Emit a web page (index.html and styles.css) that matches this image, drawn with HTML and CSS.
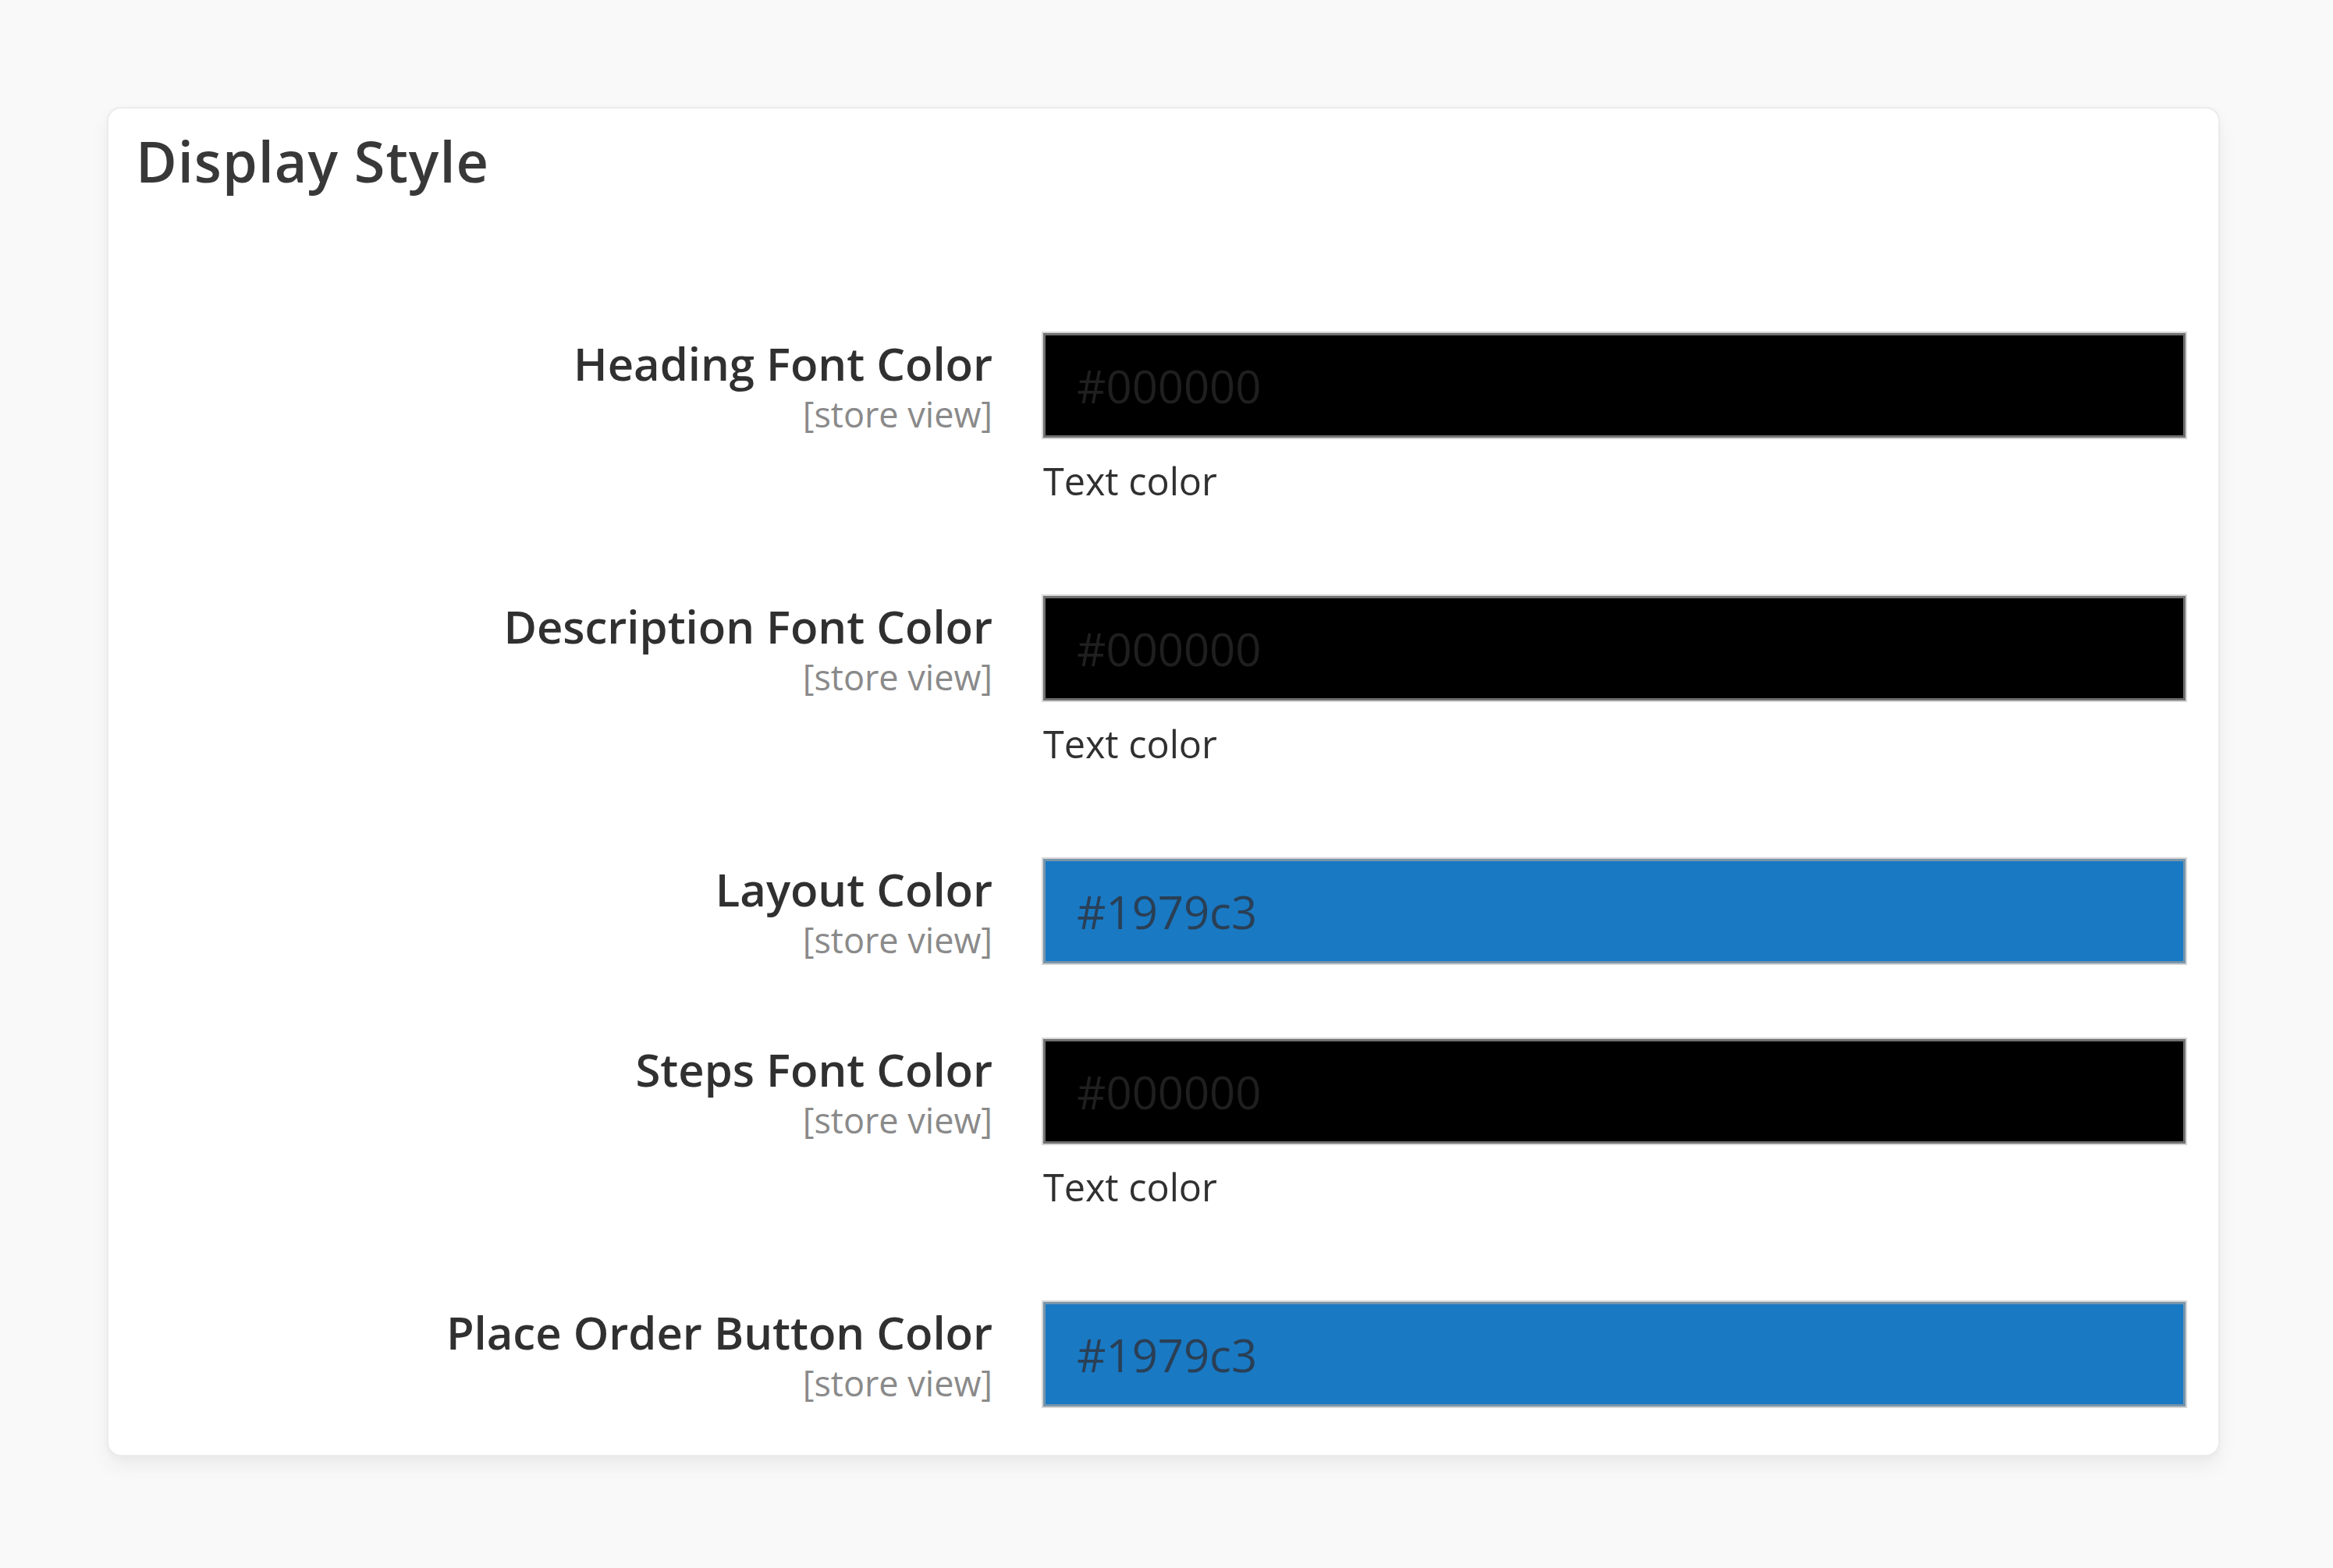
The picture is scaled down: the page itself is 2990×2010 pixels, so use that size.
FILE: index.html
```html
<!DOCTYPE html>
<html lang="en">
<head>
<meta charset="utf-8">
<title>Display Style</title>
<link rel="stylesheet" href="styles.css">
</head>
<body>
<div class="card">
  <h2 class="title">Display Style</h2>
  <div class="fields">
    <div class="field">
      <div class="label"><span class="label-text">Heading Font Color</span><span class="scope">[store view]</span></div>
      <div class="control"><input class="color-input dark" type="text" value="#000000"><div class="note">Text color</div></div>
    </div>
    <div class="field">
      <div class="label"><span class="label-text">Description Font Color</span><span class="scope">[store view]</span></div>
      <div class="control"><input class="color-input dark" type="text" value="#000000"><div class="note">Text color</div></div>
    </div>
    <div class="field">
      <div class="label"><span class="label-text">Layout Color</span><span class="scope">[store view]</span></div>
      <div class="control"><input class="color-input blue" type="text" value="#1979c3"></div>
    </div>
    <div class="field">
      <div class="label"><span class="label-text">Steps Font Color</span><span class="scope">[store view]</span></div>
      <div class="control"><input class="color-input dark" type="text" value="#000000"><div class="note">Text color</div></div>
    </div>
    <div class="field last">
      <div class="label"><span class="label-text">Place Order Button Color</span><span class="scope">[store view]</span></div>
      <div class="control"><input class="color-input blue" type="text" value="#1979c3"></div>
    </div>
  </div>
</div>
</body>
</html>
```

FILE: styles.css
```css
html, body {
  margin: 0;
  background: #f9f9f9;
}
body {
  padding: 137px;
  font-family: "Open Sans", "Noto Sans", "DejaVu Sans", sans-serif;
  color: #303030;
}
.card {
  box-sizing: border-box;
  width: 2708px;
  background: #ffffff;
  border: 2px solid #ebebeb;
  border-radius: 18px;
  padding: 25px 42px 62px 31px;
  box-shadow: 0 14px 26px rgba(0, 0, 0, 0.05), 0 3px 8px rgba(0, 0, 0, 0.03);
}
.title {
  margin: 0 0 0 4px;
  font-size: 72px;
  line-height: 84px;
  font-weight: 600;
  color: #383838;
  letter-spacing: 1px;
}
.fields {
  margin-top: 179px;
}
.field {
  display: grid;
  grid-template-columns: 1102px 1464px;
  column-gap: 65px;
  margin-bottom: 97px;
}
.field.last {
  margin-bottom: 0;
}
.label {
  text-align: right;
  padding-top: 2px;
}
.label-text {
  display: block;
  font-size: 58px;
  line-height: 74px;
  font-weight: 600;
  color: #303030;
}
.scope {
  display: block;
  font-size: 45px;
  line-height: 56px;
  color: #8a8a8a;
}
.control {
  display: flex;
  flex-direction: column;
}
.color-input {
  box-sizing: border-box;
  display: block;
  width: 100%;
  height: 134px;
  margin: 0;
  padding: 0 40px;
  border: 3px solid rgba(160, 160, 160, 0.7);
  box-shadow: 0 0 0 2px #d6d6d6;
  border-radius: 0;
  font-family: "Open Sans", "Noto Sans", "DejaVu Sans", sans-serif;
  font-size: 58px;
  color: #303030;
  outline: none;
}
.color-input.dark {
  background: #000000;
  color: #1f1f1f;
}
.color-input.blue {
  background: #1979c3;
  color: #2a3f55;
}
.note {
  margin: 20px 0 16px;
  font-size: 48.5px;
  line-height: 70px;
  color: #303030;
}
```
